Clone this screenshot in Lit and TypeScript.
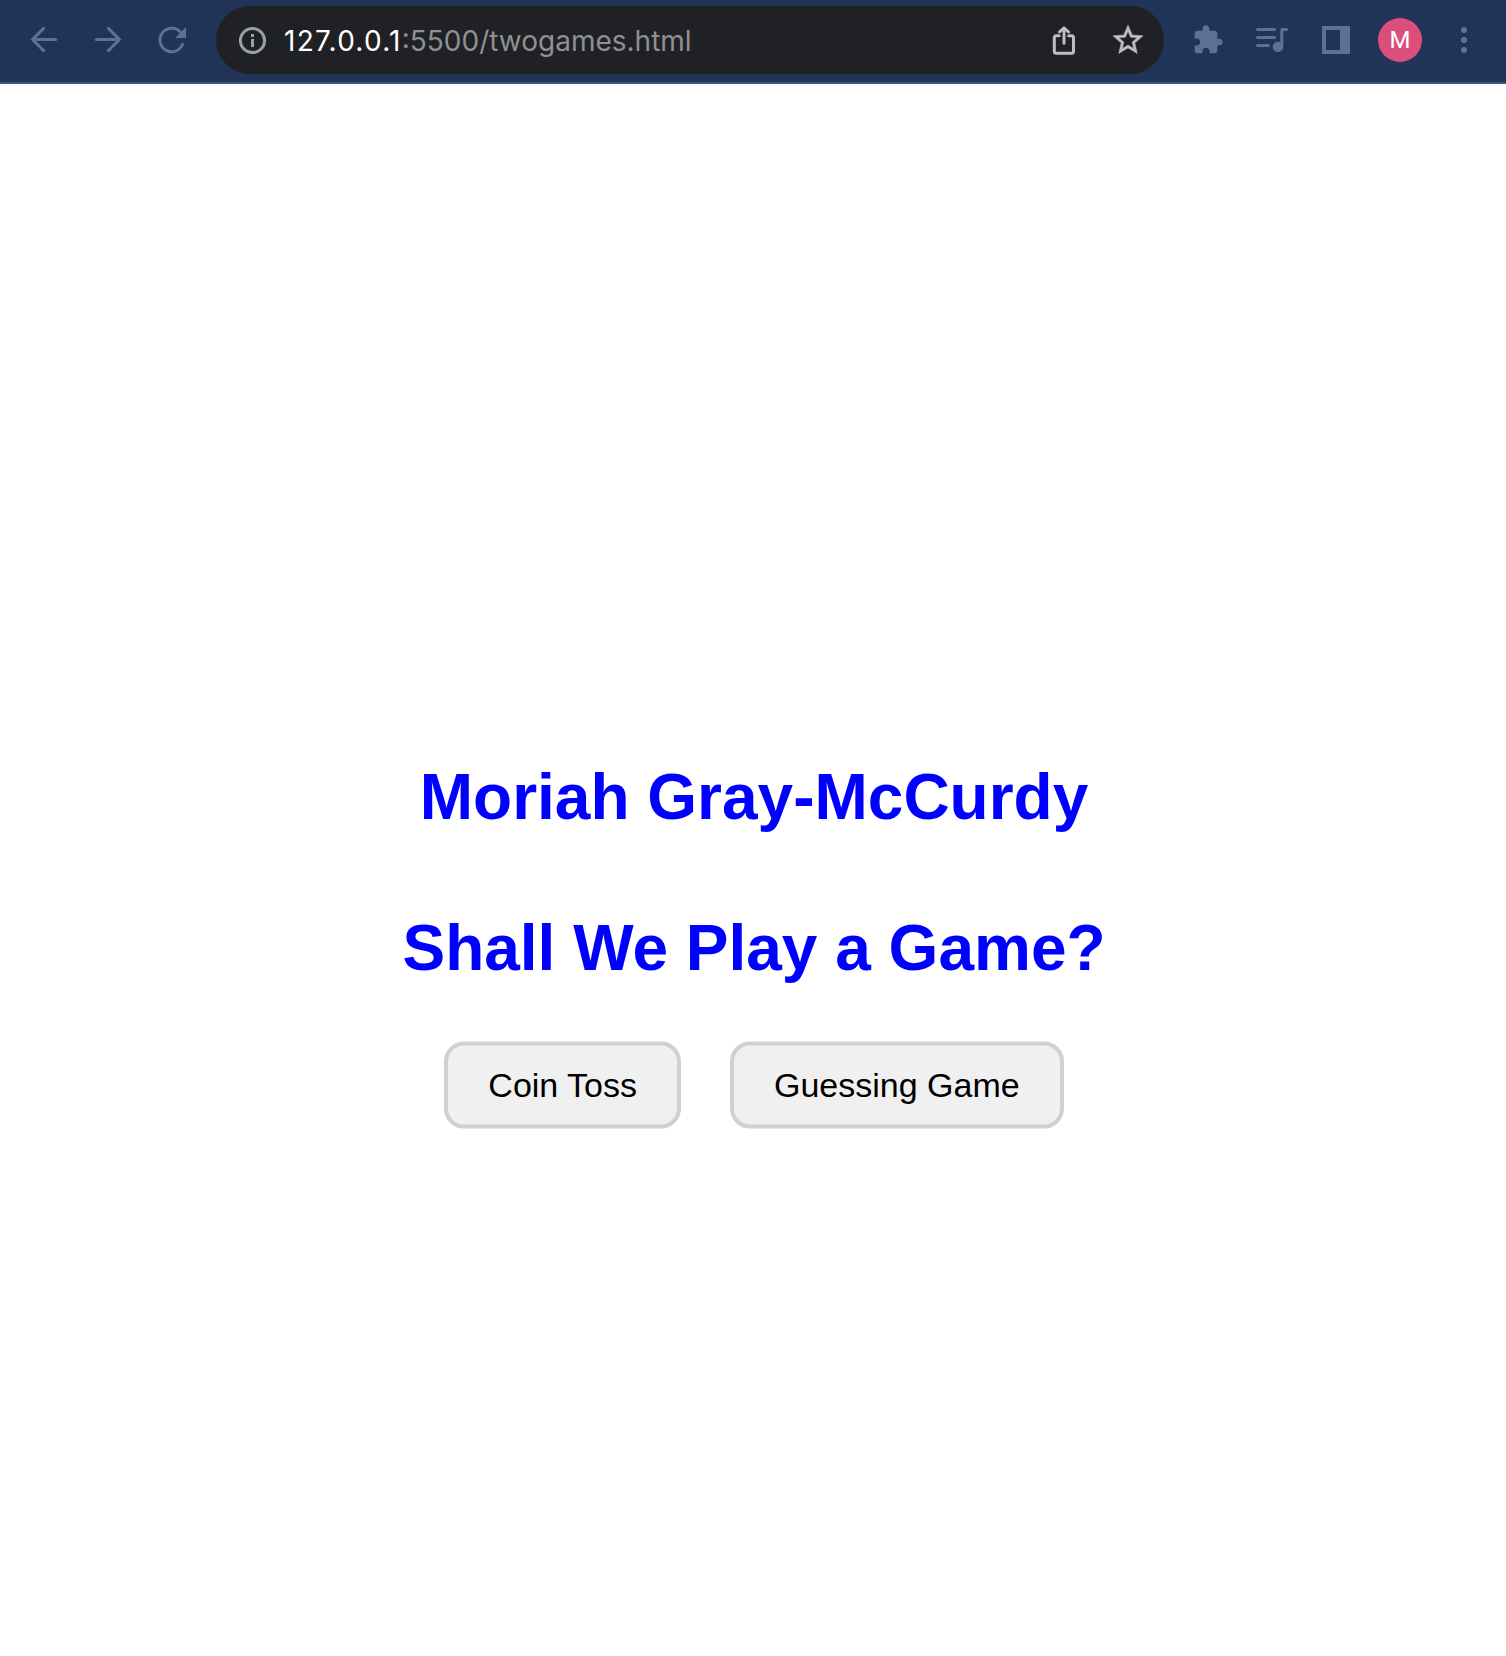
import { LitElement, html, css } from "lit";
import { customElement } from "lit/decorators.js";

@customElement("browser-toolbar")
class BrowserToolbar extends LitElement {
  static styles = css`
    :host {
      display: flex;
      align-items: center;
      box-sizing: border-box;
      height: 84px;
      padding: 0 26px 2px 28px;
      border-bottom: 2px solid #3e5378;
      background: #213356;
      color: #5f7192;
    }
    svg {
      display: block;
      flex: none;
      width: 32px;
      height: 32px;
      fill: currentColor;
    }
    .line {
      fill: none;
      stroke: currentColor;
      stroke-width: 3;
      stroke-linecap: round;
    }
    .nav,
    .tools {
      display: flex;
      align-items: center;
      gap: 32px;
    }
    .nav,
    .address {
      margin-right: 28px;
    }
    .address {
      flex: 1;
      display: flex;
      align-items: center;
      box-sizing: border-box;
      height: 68px;
      padding: 0 18px 0 20px;
      border-radius: 34px;
      background: #202124;
      color: #bdbebf;
    }
    .info {
      color: #9aa0a6;
    }
    .url {
      flex: 1;
      margin-left: 16px;
      padding-top: 1px;
      font: 28px/34px Inter, sans-serif;
      color: #8f9092;
      white-space: nowrap;
    }
    .host {
      color: #fff;
      letter-spacing: 1.25px;
    }
    .star {
      width: 36px;
      height: 36px;
      margin-left: 30px;
      stroke: currentColor;
      stroke-width: 0.35;
    }
    .avatar {
      width: 44px;
      height: 44px;
      margin: 0 26px;
      border-radius: 50%;
      background: #db4f7b;
      color: #fff;
      font: 24px/44px Roboto, sans-serif;
      text-align: center;
    }
  `;

  render() {
    return html`
      <div class="nav">
        <svg viewBox="0 0 32 32">
          <path class="line" d="M27.7 15.5H4.7M15.7 4.3L4.6 15.5L15.7 26.7" />
        </svg>
        <svg viewBox="0 0 32 32">
          <path class="line" d="M4.3 15.5H27.3M16.3 4.3L27.4 15.5L16.3 26.7" />
        </svg>
        <svg viewBox="0 0 32 32">
          <path class="line" d="M24.5 8.3A11.7 11.7 0 1 0 26.6 20.3" />
          <path d="M30 3V14H19Z" />
        </svg>
      </div>
      <div class="address">
        <svg class="info" viewBox="0 0 32 32">
          <circle cx="16.5" cy="16.5" r="12.1" fill="none" stroke="currentColor" stroke-width="3" />
          <path d="M15 10h3v3h-3zM15 15h3v8h-3z" />
        </svg>
        <div class="url"><span class="host">127.0.0.1</span>:5500/twogames.html</div>
        <svg viewBox="0 0 32 32">
          <path class="line" stroke-linejoin="round"
            d="M11.2 11.7H8.3A2 2 0 0 0 6.3 13.7V27.2A2 2 0 0 0 8.3 29.2H23.5A2 2 0 0 0 25.5 27.2V13.7A2 2 0 0 0 23.5 11.7H20.7M16 19.2V4.2M11.4 8L16 3.8L20.6 8" />
        </svg>
        <svg class="star" viewBox="0 0 24 24">
          <path
            d="M22 9.24l-7.19-.62L12 2 9.19 8.63 2 9.24l5.46 4.73L5.82 21 12 17.27 18.18 21l-1.63-7.03L22 9.24zM12 15.4l-3.76 2.27 1-4.28-3.32-2.88 4.38-.38L12 6.1l1.71 4.04 4.38.38-3.32 2.88 1 4.28L12 15.4z" />
        </svg>
      </div>
      <div class="tools">
        <svg viewBox="0 0 24 24">
          <path
            d="M20.5 11H19V7c0-1.1-.9-2-2-2h-4V3.5C13 2.12 11.88 1 10.5 1S8 2.12 8 3.5V5H4c-1.1 0-1.99.9-1.99 2v3.8H3.5c1.49 0 2.7 1.21 2.7 2.7s-1.21 2.7-2.7 2.7H2V20c0 1.1.9 2 2 2h3.8v-1.5c0-1.49 1.21-2.7 2.7-2.7 1.49 0 2.7 1.21 2.7 2.7V22H17c1.1 0 2-.9 2-2v-4h1.5c1.38 0 2.5-1.12 2.5-2.5S21.88 11 20.5 11z" />
        </svg>
        <svg viewBox="0 0 32 32">
          <path class="line" d="M1.5 5.5H18.6M1.5 13.5H18.6M1.5 21.5H12.3" />
          <circle cx="22" cy="22.7" r="5.3" />
          <path d="M24.3 22.7V5.5Q24.3 4 25.8 4H30.5A1.5 1.5 0 0 1 30.5 7H27.3V22.7Z" />
        </svg>
        <svg viewBox="0 0 32 32">
          <path fill-rule="evenodd" d="M2 2H30V30H2ZM6 6V26H20V6Z" />
        </svg>
      </div>
      <div class="avatar">M</div>
      <svg viewBox="0 0 32 32">
        <circle cx="16" cy="6" r="3" />
        <circle cx="16" cy="16" r="3" />
        <circle cx="16" cy="26" r="3" />
      </svg>
    `;
  }
}

@customElement("app-root")
class AppRoot extends LitElement {
  static styles = css`
    :host {
      display: flex;
      flex-direction: column;
      height: 1656px;
      background: #fff;
      font-family: "Liberation Sans", Arial, sans-serif;
    }
    main {
      flex: 1;
      display: flex;
      flex-direction: column;
      align-items: center;
      padding: 676px 0 0 2px;
    }
    h1 {
      margin: 0 0 77px;
      font-size: 64px;
      line-height: 74px;
      font-weight: 700;
      color: #00f;
      white-space: nowrap;
    }
    .title {
      margin-bottom: 56px;
    }
    .games {
      display: flex;
      gap: 49px;
      transform: translateY(0.5px);
    }
    button {
      box-sizing: border-box;
      height: 87px;
      padding: 0 40px;
      border: 4px solid #d0d0d0;
      border-radius: 20px;
      background: #f0f0f0;
      color: #000;
      font: 34px/39px "Liberation Sans", Arial, sans-serif;
      white-space: nowrap;
    }
  `;

  render() {
    return html`
      <browser-toolbar></browser-toolbar>
      <main>
        <h1>Moriah Gray-McCurdy</h1>
        <h1 class="title">Shall We Play a Game?</h1>
        <div class="games">
          <button>Coin Toss</button>
          <button>Guessing Game</button>
        </div>
      </main>
    `;
  }
}
